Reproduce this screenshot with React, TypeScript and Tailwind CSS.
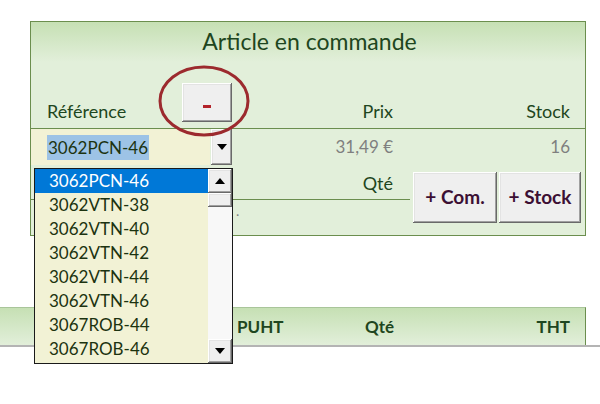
import React from "react";

const items = [
  "3062PCN-46",
  "3062VTN-38",
  "3062VTN-40",
  "3062VTN-42",
  "3062VTN-44",
  "3062VTN-46",
  "3067ROB-44",
  "3067ROB-46",
];

const bevel =
  "bg-[#efefef] shadow-[inset_-1px_-1px_#696969,inset_1px_1px_#ffffff,inset_-2px_-2px_#a0a0a0,inset_2px_2px_#e3e3e3]";

const Arrow = ({ up }: { up?: boolean }) => (
  <svg width="10" height="6" viewBox="0 0 10 6">
    <polygon points={up ? "0,6 10,6 5,0" : "0,0 10,0 5,6"} fill="#000" />
  </svg>
);

export default function App() {
  return (
    <div
      className="relative w-[600px] h-[404px] bg-white overflow-hidden"
      style={{ fontFamily: "Lato, 'Open Sans', sans-serif" }}
    >
      <div className="pt-[21px] pl-[30px]">
        <div className="w-[556px] border border-[#6b8e4e] bg-[#e2efda] text-[#1e4620]">
          {/* title */}
          <div className="h-[40px] flex items-center justify-center bg-gradient-to-b from-[#c6e0b4] to-[#e2efda] text-[23px] pb-[2px] pl-[3px]">
            Article en commande
          </div>

          {/* header row */}
          <div className="h-[67px] grid grid-cols-[201px_178px_1fr] border-b border-[#6b8e4e] text-[18px]">
            <div className="relative flex items-end pl-[16px] pb-[3px]">
              <span>Référence</span>
              <button
                className={`absolute left-[151px] top-[21px] w-[50px] h-[39px] ${bevel} flex items-center justify-center`}
              >
                <span className="block w-[8px] h-[3px] mt-[8px] bg-[#b3232a]" />
              </button>
            </div>
            <div className="flex items-end justify-end pr-[17px] pb-[3px]">Prix</div>
            <div className="flex items-end justify-end pr-[15px] pb-[3px]">Stock</div>
          </div>

          {/* values row */}
          <div className="h-[36px] grid grid-cols-[201px_178px_1fr] text-[17px] text-[#7f7f7f]">
            <div className="flex">
              <div className="w-[179px] bg-[#f2f2d5] flex items-center pl-[16px]">
                <span className="bg-[#9dc3e6] text-[#1c3310] px-[1px] leading-[25px]">3062PCN-46</span>
              </div>
              <div className={`w-[21px] ml-[1px] flex items-center justify-center ${bevel}`}>
                <Arrow />
              </div>
            </div>
            <div className="flex items-center justify-end pr-[17px]">31,49 €</div>
            <div className="flex items-center justify-end pr-[15px]">16</div>
          </div>

          {/* qty + buttons */}
          <div className="flex h-[70px]">
            <div className="w-[379px] flex flex-col">
              <div className="h-[35px] border-b border-[#6b8e4e] flex items-start justify-end pr-[17px] pt-[5px] text-[18px]">
                Qté
              </div>
              <div className="flex-1 pl-[205px] text-[#7f7f7f] text-[14px]">.</div>
            </div>
            <div className="flex gap-[2px] pl-[3px] pt-[7px]">
              <button className={`w-[84px] h-[51px] ${bevel} font-bold text-[19px] text-[#3c0f34]`}>
                + Com.
              </button>
              <button className={`w-[82px] h-[51px] ${bevel} font-bold text-[19px] text-[#3c0f34]`}>
                + Stock
              </button>
            </div>
          </div>
        </div>
      </div>

      {/* bottom header band */}
      <div className="mt-[71px] flex">
        <div className="w-[586px] h-[38px] border-t border-[#a9c59a] border-r border-r-[#6b8e4e] bg-gradient-to-b from-[#c6e0b4] to-[#e2efda] grid grid-cols-[232px_179px_1fr] font-bold text-[17px] text-[#1e4620]">
          <div />
          <div className="flex items-center justify-between pr-[17px] pl-[5px]">
            <span>PUHT</span>
            <span>Qté</span>
          </div>
          <div className="flex items-center justify-end pr-[15px]">THT</div>
        </div>
      </div>
      <div className="w-[600px] h-[2px] bg-[#b4b4b4]" />

      {/* red ellipse annotation */}
      <svg className="absolute left-[158px] top-[65px]" width="92" height="72" viewBox="0 0 92 72">
        <ellipse cx="46" cy="36" rx="44" ry="34" fill="none" stroke="#9c2a2e" strokeWidth="3" />
      </svg>

      {/* dropdown list */}
      <div className="absolute left-[34px] top-[168px] w-[199px] h-[196px] border border-[#1a1a1a] bg-[#f2f2d5] flex">
        <div className="flex-1 flex flex-col">
          {items.map((it, i) => (
            <div
              key={it}
              className={`h-[24px] flex items-center pl-[14px] text-[17px] ${
                i === 0 ? "bg-[#0078d7] text-white" : "text-[#1c3310]"
              }`}
            >
              {it}
            </div>
          ))}
        </div>
        <div className="w-[24px] flex flex-col bg-[#f8f8f8]">
          <div className={`h-[24px] flex items-center justify-center ${bevel}`}>
            <Arrow up />
          </div>
          <div className={`h-[14px] ${bevel}`} />
          <div className="flex-1" />
          <div className={`h-[24px] flex items-center justify-center ${bevel}`}>
            <Arrow />
          </div>
        </div>
      </div>
    </div>
  );
}
